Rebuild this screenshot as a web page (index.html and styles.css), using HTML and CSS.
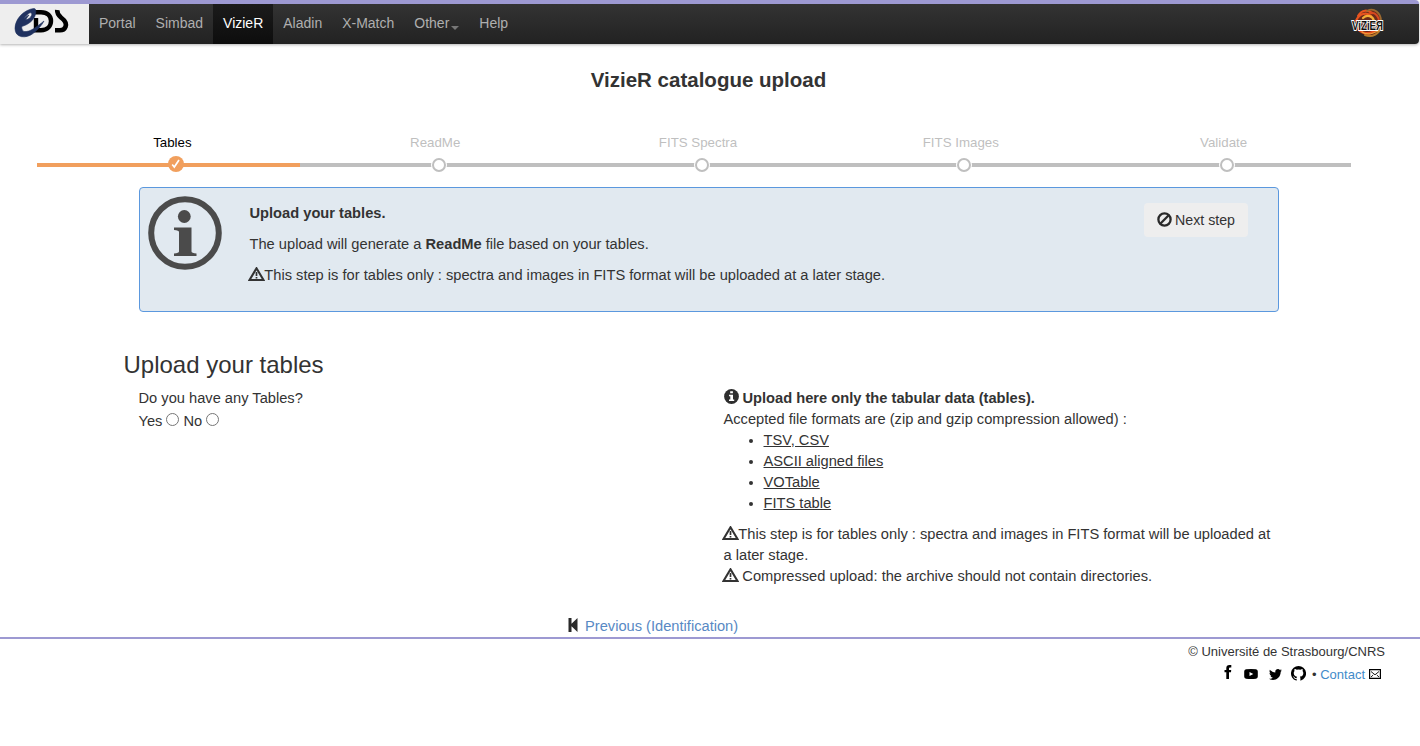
FILE: index.html
```html
<!DOCTYPE html>
<html lang="en">
<head>
<meta charset="utf-8">
<title>VizieR catalogue upload</title>
<link rel="stylesheet" href="styles.css">
</head>
<body>
<svg class="defs" width="0" height="0">
  <symbol id="warn" viewBox="0 0 17 14"><path d="M8.500 1.300 15.500 13H1.500Z" fill="none" stroke="currentColor" stroke-width="2.100"/><path d="M8.500 5v4M8.500 10v1.500" stroke="currentColor" stroke-width="1.700"/></symbol>
</svg>
<header class="navbar">
  <a class="logo"><svg width="57" height="30" viewBox="0 0 57 30">
    <path d="M20 4.200H27C33.500 4.200 37 8 37 13S33.500 22.200 27 22.200H22V10" fill="none" stroke="#000" stroke-width="4.400"/>
    <path d="M43.200 2C43 5.500 44 7 47 9.500 51 12.500 53 15 51.500 18.800 50.300 21.700 49 22.200 46 22.200H41" fill="none" stroke="#000" stroke-width="4.600"/>
    <path d="M20 .500C10 1.500 1 11 1 20.500 1 30 12 31 19 25.500 24 21.500 28 17 30 13 23 18.500 16 24.500 10 23.500 6 22 7 12 14 6 16.500 3.800 18.500 5 17.500 7.500 16.500 10 14 11.500 11.500 11.800L15 7C10 9 7 15 7.500 18.500 14 17 20.500 12 21.500 6 22 3 22 .500 20 .500Z" fill="#203260" stroke="#203260" stroke-width=".600"/>
  </svg></a>
  <nav class="menu"><a>Portal</a><a>Simbad</a><a class="active">VizieR</a><a>Aladin</a><a>X-Match</a><a>Other<i class="caret"></i></a><a>Help</a></nav>
  <a class="brand"><svg width="38" height="32" viewBox="0 0 38 32">
    <path d="M9 8C13 2 22 1 28 5 31 10 33 20 28 26 22 31 13 29 8 24 5 19 6 13 9 8Z" fill="#93290f" opacity=".6"/>
    <g fill="none" stroke-linecap="round"><path d="M8 9C12 2 18 3 22 6M6 14C9 6 17 5 21 9" stroke="#e8541f" stroke-width="2.200"/><path d="M17 4C24 0 31 6 31 14" stroke="#9c6a30" stroke-width="1.800"/><path d="M20 6C26 5 29 10 29 15" stroke="#d8481f" stroke-width="2"/><path d="M31 19C30 27 22 31 15 28" stroke="#b87a2a" stroke-width="2"/><path d="M7 20C11 28 21 28 27 22" stroke="#e64c20" stroke-width="2.500"/><path d="M13 11C17 7 23 9 24 14" stroke="#f3ad35" stroke-width="2.200"/><path d="M12 25C18 29 24 26 28 24" stroke="#eba13a" stroke-width="1.200"/></g>
    <text x="2" y="23" textLength="31" lengthAdjust="spacingAndGlyphs" class="brand-text">ViZiEЯ</text>
  </svg></a>
</header>
<main>
  <h1>VizieR catalogue upload</h1>
  <ol class="steps">
    <li class="done"><span>Tables</span><b><svg width="10" height="10" viewBox="0 0 10 10"><path d="M1.200 5.500 3.300 8 8 1" fill="none" stroke="#fff" stroke-width="1.700"/></svg></b></li>
    <li><span>ReadMe</span><b></b></li>
    <li><span>FITS Spectra</span><b></b></li>
    <li><span>FITS Images</span><b></b></li>
    <li><span>Validate</span><b></b></li>
  </ol>
  <section class="info">
    <svg class="info-icon" width="74" height="74" viewBox="0 0 74 74"><circle cx="37" cy="37" r="33.800" fill="none" stroke="#4b4b4b" stroke-width="6"/><circle cx="36.300" cy="20.500" r="6.400" fill="#4b4b4b"/><path d="M26 31.500H43.500V55.500Q43.500 57 48.500 57.500V60H26V57.500Q31 57 31 55.500V36Q31 34.500 26 34Z" fill="#4b4b4b"/></svg>
    <div class="info-text">
      <p><strong>Upload your tables.</strong></p>
      <p>The upload will generate a <strong>ReadMe</strong> file based on your tables.</p>
      <p><svg class="warn"><use href="#warn"/></svg>This step is for tables only : spectra and images in FITS format will be uploaded at a later stage.</p>
    </div>
    <button class="next"><svg width="15" height="15" viewBox="0 0 15 15"><circle cx="7.500" cy="7.500" r="6.100" fill="none" stroke="#2a2a2a" stroke-width="2.300"/><path d="M3.300 11.700 11.700 3.300" stroke="#2a2a2a" stroke-width="2.300"/></svg>Next step</button>
  </section>
  <section class="upload">
    <h2>Upload your tables</h2>
    <div class="columns">
      <div class="question">
        <p>Do you have any Tables?</p>
        <div class="choices"><label>Yes <input type="radio" name="tables"></label><label>No <input type="radio" name="tables"></label></div>
      </div>
      <div class="help">
        <p><svg class="info-small" width="15" height="15" viewBox="0 0 15 15"><circle cx="7.500" cy="7.500" r="7.400" fill="#2e2e2e"/><path d="M6.200 2.200h2.700v2H6.200ZM5 5.700h4v4.700h1.200V12H5v-1.600h1.300V7.200H5Z" fill="#fff"/></svg><strong>Upload here only the tabular data (tables).</strong></p>
        <p>Accepted file formats are (zip and gzip compression allowed) :</p>
        <ul><li><a>TSV, CSV</a></li><li><a>ASCII aligned files</a></li><li><a>VOTable</a></li><li><a>FITS table</a></li></ul>
        <p><svg class="warn"><use href="#warn"/></svg>This step is for tables only : spectra and images in FITS format will be uploaded at a later stage.</p>
        <p><svg class="warn spaced"><use href="#warn"/></svg>Compressed upload: the archive should not contain directories.</p>
      </div>
    </div>
  </section>
  <div class="previous"><svg width="11" height="14" viewBox="0 0 11 14"><path d="M.5 0h3v5.800L9.500 0v14L3.500 8.200V14h-3Z" fill="#2a2a2a"/></svg><a>Previous (Identification)</a></div>
</main>
<footer>
  <p>© Université de Strasbourg/CNRS</p>
  <div class="social">
    <svg width="8" height="14" viewBox="0 0 8 14"><path d="M7.300 0v2.500H6Q5 2.500 5 3.500V5h2.200L7 7.300H5V14H2.300V7.300H.5V5h1.800V3.300Q2.300 0 5.500 0Z"/></svg>
    <svg class="yt" width="14" height="10" viewBox="0 0 14 10"><path fill-rule="evenodd" d="M2 .3Q7-.3 12 .3 13.800.5 13.800 2.500V7.500Q13.800 9.500 12 9.700 7 10.300 2 9.700.2 9.500.2 7.500V2.500Q.2.500 2 .3ZM5.500 3v4L9.300 5Z"/></svg>
    <svg class="tw" width="13" height="11" viewBox="0 0 13 11"><path d="M13 1.400 11.700 2.800C11.700 8 7.700 11 4 11 2.500 11 1.100 10.500 0 9.800 1.500 9.900 2.700 9.500 3.900 8.700 2.700 8.600 1.800 7.900 1.400 6.800H2.600C1.200 6.400.5 5.300.5 4.100L1.700 4.400C.5 3.500.2 2 .9.700 2.300 2.400 4.200 3.400 6.400 3.500 5.900 1.500 7.200 0 9 0 9.800 0 10.400.3 10.900.9L12.600.3 11.500 1.700Z"/></svg>
    <svg class="gh" width="15" height="15" viewBox="0 0 16 16"><path d="M8 0a8 8 0 0 0-2.530 15.590c.4.070.550-.170.550-.380v-1.490c-2.010.370-2.530-.490-2.690-.940-.090-.230-.480-.940-.820-1.130-.280-.150-.680-.520-.010-.530.630-.010 1.080.580 1.230.820.720 1.210 1.870.870 2.330.660.070-.520.280-.870.510-1.070-1.780-.2-3.640-.890-3.640-3.950 0-.870.310-1.590.820-2.150-.080-.2-.360-1.020.080-2.120 0 0 .670-.210 2.200.820a7.600 7.600 0 0 1 4 0c1.530-1.040 2.200-.820 2.200-.820.440 1.100.160 1.920.080 2.120.510.560.820 1.270.820 2.150 0 3.070-1.870 3.750-3.650 3.950.290.250.540.730.540 1.480v2.200c0 .210.150.460.550.380A8 8 0 0 0 8 0Z"/></svg>
    <span>• <a>Contact</a></span>
    <svg class="mail" width="12" height="10" viewBox="0 0 12 10"><path d="M.6.600h10.800v8.800H.6Z" fill="none" stroke="#000" stroke-width="1.200"/><path d="M2 2.500l4 3.300 4-3.300M2 8l2.200-2M10 8 7.800 6" fill="none" stroke="#000" stroke-width=".9"/></svg>
  </div>
</footer>
</body>
</html>
```
FILE: styles.css
```css
* { box-sizing: border-box; }
body { margin: 0; font: 14.67px/21px "Liberation Sans", Arial, sans-serif; color: #333; background: #fff; }
p, h1, h2, ul, ol { margin: 0; padding: 0; }
.defs { position: absolute; }
.navbar { display: flex; height: 44px; margin-right: 1px; border-top: 4px solid #9d99d2; border-radius: 0 4px 4px 0; background: linear-gradient(#333, #222); box-shadow: 0 1px 3px rgba(0,0,0,.3); }
.logo { width: 89px; background: #eee; padding: 4px 0 0 14px; }
.menu { display: flex; font-size: 14px; line-height: 20px; color: #afafaf; }
.menu a { padding: 9px 10px 11px; }
.menu .active { color: #fff; background: linear-gradient(#1b1b1b, #0d0d0d); }
.caret { display: inline-block; border: 4px solid transparent; border-top-color: #777; border-bottom: 0; margin-left: 2px; vertical-align: -2px; }
.brand { margin-left: auto; margin-right: 31px; padding-top: 3px; }
.brand svg { overflow: visible; }
.brand-text { font: bold 12px "Liberation Sans", sans-serif; fill: #111; stroke: #fff; stroke-width: 1.8px; paint-order: stroke; }
h1 { padding-top: 25px; text-align: center; font-size: 20.53px; line-height: 22px; padding-right: 3px; }
.steps { display: flex; list-style: none; margin: 41px 69px 0 37px; height: 41px; font-size: 13.3px; }
.steps li { flex: 1; display: flex; flex-direction: column; align-items: center; color: #bfbfbf; background: linear-gradient(#bfbfbf, #bfbfbf) 0 31px / 100% 4px no-repeat; }
.steps .done { color: #000; background-image: linear-gradient(#f19f5d, #f19f5d); }
.steps span { padding-left: 8px; line-height: 21px; height: 24px; }
.steps b { width: 16px; height: 16px; margin-left: 15px; border-radius: 50%; border: 2px solid #bfbfbf; background: #fff; box-shadow: 0 0 0 1px #fff; }
.steps li:not(.done) b { width: 14px; height: 14px; margin-top: 2px; margin-left: 15.4px; }
.steps .done b { display: flex; align-items: center; justify-content: center; border: 0; background: #f19f5d; box-shadow: none; }
.info { display: flex; width: 1140px; height: 125px; margin: 14px 0 0 139px; border: 1px solid #5b98de; border-radius: 4px; background: #e1e9f0; padding: 8px 30px 0 8px; }
.info-text { margin-left: 27.5px; padding-top: 7px; }
.info-text p { margin-bottom: 10px; }
.warn { width: 17px; height: 14px; margin: 0 -1px 0 -1.2px; vertical-align: -1px; }
.warn.spaced { margin-right: 3px; }
.next { margin: 7px 0 0 auto; width: 104px; height: 34px; border: 0; border-radius: 4px; background: #eee; color: #333; font: 14.2px "Liberation Sans", sans-serif; display: flex; align-items: center; justify-content: center; gap: 3px; padding: 0; }
.next svg { margin-bottom: 2px; }
.upload { margin: 40px 139px 0 123.5px; }
h2 { font-size: 24px; font-weight: 400; line-height: 26px; }
.columns { display: grid; grid-template-columns: 585px 555px; padding: 10px 0 0 15px; }
.choices { display: flex; gap: 4px; padding-top: 2px; }
.choices input { margin: 0; width: 13px; height: 13px; }
.help ul { padding-left: 40px; margin-bottom: 10px; }
.info-small { margin-right: 4px; vertical-align: -1px; }
.help a { text-decoration: underline; }
.previous { display: flex; align-items: center; gap: 6px; margin: 28px 0 0 568px; height: 22px; color: #5889c4; }
.previous svg { margin-bottom: 2px; }
footer { border-top: 2px solid #9d99d2; padding: 2px 35px 0 0; font-size: 13px; text-align: right; }
.social { display: flex; justify-content: flex-end; align-items: center; height: 24px; padding-right: 4px; }
.social .yt { margin-left: 12px; }
.social .tw { margin-left: 11px; }
.social .gh { margin: 0 6px 2px 9px; }
.social > svg:first-child { margin-bottom: 4px; }
.social a { color: #428bca; }
.mail { margin-left: 4px; }
```
